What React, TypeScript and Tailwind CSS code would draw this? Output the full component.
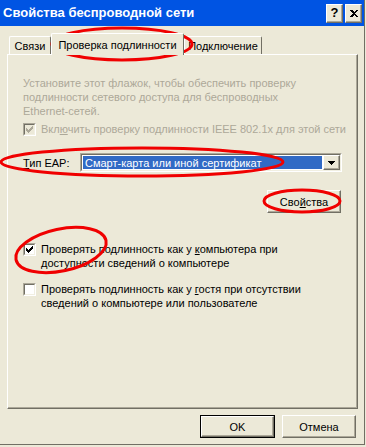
import type { ReactNode } from 'react';

const raised =
  'border border-t-white border-l-white border-r-[#716F64] border-b-[#716F64] shadow-[inset_-1px_-1px_0_#ACA899] bg-[#ECE9D8]';

function Button({ children, w, isDefault = false }: { children: ReactNode; w: string; isDefault?: boolean }) {
  if (isDefault) {
    return (
      <div className={`${w} h-[23px] border border-black`}>
        <div className={`h-full w-full ${raised} flex items-center justify-center text-black`}>{children}</div>
      </div>
    );
  }
  return <div className={`${w} h-[23px] ${raised} flex items-center justify-center text-black`}>{children}</div>;
}

function CheckMark({ color }: { color: string }) {
  // classic 7x7 check glyph, one rect per column
  const cols = [3, 4, 5, 4, 3, 2, 1];
  return (
    <svg width="9" height="9" viewBox="0 0 9 9" shapeRendering="crispEdges">
      {cols.map((y, i) => (
        <rect key={i} x={i + 1} y={y} width="1" height="3" fill={color} />
      ))}
    </svg>
  );
}

function CheckBox({ checked, disabled = false }: { checked: boolean; disabled?: boolean }) {
  return (
    <div className="w-[13px] h-[13px] shrink-0 border border-t-[#ACA899] border-l-[#ACA899] border-r-white border-b-white">
      <div
        className={`w-full h-full border border-t-[#716F64] border-l-[#716F64] border-r-[#F1EFE2] border-b-[#F1EFE2] ${
          disabled ? 'bg-[#ECE9D8]' : 'bg-white'
        }`}
      >
        {checked && <CheckMark color={disabled ? '#ACA899' : '#000000'} />}
      </div>
    </div>
  );
}

function Tab({ label, w, selected = false }: { label: string; w: string; selected?: boolean }) {
  return (
    <div
      className={`${w} ${
        selected ? 'h-[22px] -mb-px z-10 relative' : 'h-[18px]'
      } bg-[#ECE9D8] border-t border-l border-r border-t-white border-l-white border-r-[#716F64] rounded-t-[2px] flex items-center justify-center text-black`}
    >
      {label}
    </div>
  );
}

export default function App() {
  return (
    <div className="relative w-[366px] h-[447px] bg-[#ECE9D8] overflow-hidden font-['Liberation_Sans',Arial,sans-serif] text-[11px] leading-[14px]">
      <div className="w-[365px] h-[445px] border-r border-b border-[#716F64] flex flex-col">
        {/* title bar */}
        <div className="h-[26px] bg-[#0054E3] flex items-center justify-between pl-[3px] pr-[2px]">
          <span className="text-white font-bold text-[13px]">Свойства беспроводной сети</span>
          <div className="flex gap-[2px]">
            <div className={`w-[17px] h-[19px] ${raised} flex items-center justify-center font-bold text-[13px] text-black`}>?</div>
            <div className={`w-[17px] h-[19px] ${raised} flex items-center justify-center`}>
              <svg width="8" height="7" viewBox="0 0 8 7" shapeRendering="crispEdges">
                <path d="M0 0h2l2 2 2-2h2L5 3.5 8 7H6L4 5 2 7H0l3-3.5z" fill="#000" />
              </svg>
            </div>
          </div>
        </div>

        <div className="px-[7px] pt-[7px]">
          {/* tabs */}
          <div className="flex items-end h-[21px] pl-[2px]">
            <Tab label="Связи" w="w-[42px]" />
            <Tab label="Проверка подлинности" w="w-[133px]" selected />
            <Tab label="Подключение" w="w-[78px]" />
          </div>

          {/* tab panel */}
          <div className="w-[351px] h-[355px] border border-t-white border-l-white border-r-[#716F64] border-b-[#716F64] shadow-[inset_-1px_-1px_0_#ACA899] pl-[15px] pt-[21px] flex flex-col">
            <p className="text-[#ACA899]">
              Установите этот флажок, чтобы обеспечить проверку
              <br />
              подлинности сетевого доступа для беспроводных
              <br />
              Ethernet-сетей.
            </p>
            <div className="mt-[4px] flex items-center gap-[5px] text-[#ACA899]">
              <CheckBox checked disabled />
              <span>
                Вкл<span className="underline">ю</span>чить проверку подлинности IEEE 802.1x для этой сети
              </span>
            </div>

            <div className="mt-[17px] flex items-center h-[19px]">
              <span className="w-[57px] text-black">
                <span className="underline">Т</span>ип EAP:
              </span>
              <div className="w-[262px] h-[19px] border border-t-[#ACA899] border-l-[#ACA899] border-r-white border-b-white">
                <div className="w-full h-full border border-t-[#716F64] border-l-[#716F64] border-r-[#F1EFE2] border-b-[#F1EFE2] bg-white flex">
                  <div className="flex-1 m-px bg-[#316AC5] text-white flex items-center pl-[2px]">
                    Смарт-карта или иной сертификат
                  </div>
                  <div className={`w-[17px] h-full ${raised} flex items-center justify-center`}>
                    <svg width="7" height="4" viewBox="0 0 7 4" shapeRendering="crispEdges">
                      <path d="M0 0h7L3.5 4z" fill="#000" />
                    </svg>
                  </div>
                </div>
              </div>
            </div>

            <div className="mt-[18px] flex justify-end pr-[16px]">
              <Button w="w-[74px]">
                <span>
                  Сво<span className="underline">й</span>ства
                </span>
              </Button>
            </div>

            <div className="mt-[29px] flex items-start gap-[5px] text-black">
              <div className="mt-px">
                <CheckBox checked />
              </div>
              <span>
                Проверять подлинность как у <span className="underline">к</span>омпьютера при
                <br />
                доступности сведений о компьютере
              </span>
            </div>

            <div className="mt-[12px] flex items-start gap-[5px] text-black">
              <div className="mt-px">
                <CheckBox checked={false} />
              </div>
              <span>
                Проверять подлинность как у <span className="underline">г</span>остя при отсутствии
                <br />
                сведений о компьютере или пользователе
              </span>
            </div>
          </div>

          {/* dialog buttons */}
          <div className="mt-[6px] flex justify-end gap-[7px] pr-px">
            <Button w="w-[75px]" isDefault>
              OK
            </Button>
            <Button w="w-[74px]">Отмена</Button>
          </div>
        </div>
      </div>

      {/* red annotation ellipses */}
      <svg className="absolute inset-0 pointer-events-none" width="366" height="447" viewBox="0 0 366 447">
        <g fill="none" stroke="#F00000" strokeWidth="3">
          <ellipse cx="122" cy="44" rx="70" ry="16" />
          <ellipse cx="142" cy="162" rx="141" ry="14" />
          <ellipse cx="302" cy="201" rx="38" ry="11" />
          <ellipse cx="61" cy="250" rx="46" ry="21" transform="rotate(-12 61 250)" />
        </g>
      </svg>
    </div>
  );
}
